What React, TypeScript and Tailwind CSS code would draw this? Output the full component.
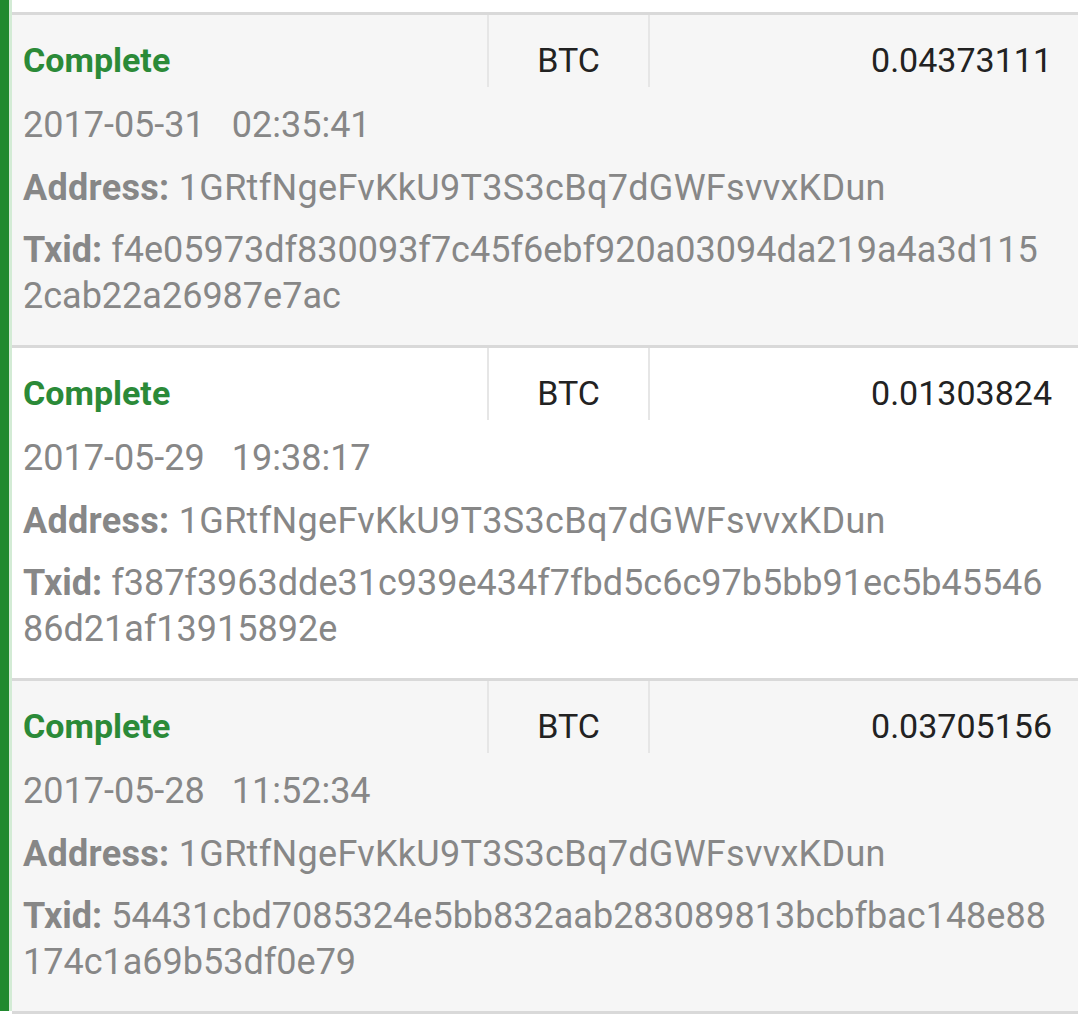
const rows = [
  {
    amount: "0.04373111",
    date: "2017-05-31",
    time: "02:35:41",
    address: "1GRtfNgeFvKkU9T3S3cBq7dGWFsvvxKDun",
    txid: ["f4e05973df830093f7c45f6ebf920a03094da219a4a3d115", "2cab22a26987e7ac"],
    bg: "bg-[#f6f6f6]",
  },
  {
    amount: "0.01303824",
    date: "2017-05-29",
    time: "19:38:17",
    address: "1GRtfNgeFvKkU9T3S3cBq7dGWFsvvxKDun",
    txid: ["f387f3963dde31c939e434f7fbd5c6c97b5bb91ec5b45546", "86d21af13915892e"],
    bg: "bg-white",
  },
  {
    amount: "0.03705156",
    date: "2017-05-28",
    time: "11:52:34",
    address: "1GRtfNgeFvKkU9T3S3cBq7dGWFsvvxKDun",
    txid: ["54431cbd7085324e5bb832aab283089813bcbfbac148e88", "174c1a69b53df0e79"],
    bg: "bg-[#f6f6f6]",
  },
];

function Bar() {
  return (
    <div className="flex shrink-0">
      <div className="w-[9px] bg-[#21892f]" />
      <div className="w-[3px] bg-[#d3ebd5]" />
    </div>
  );
}

function Row({ r }: { r: (typeof rows)[number] }) {
  return (
    <div className={`flex ${r.bg}`}>
      <Bar />
      <div className="flex-1 border-t-[3px] border-[#d9d9d9]">
        <div className="flex h-[72px] text-[34px]">
          <div className="flex-1 pl-[11px] pt-[22px] border-r-2 border-[#e6e6e6] text-[#2b8a38] font-bold">
            Complete
          </div>
          <div className="w-[161px] pt-[22px] text-center border-r-2 border-[#e6e6e6] text-[#222]">BTC</div>
          <div className="w-[428px] pt-[22px] pr-[26px] text-right text-[#222]">{r.amount}</div>
        </div>
        <div className="pl-[11px] pr-[20px] pb-[26px] text-[36px] text-[#878787]">
          <div className="mt-[15px]">
            <span>{r.date}</span>
            <span className="ml-[27px]">{r.time}</span>
          </div>
          <div className="mt-[17px] tracking-[0.3px]">
            <span className="font-bold">Address:</span> {r.address}
          </div>
          <div className="mt-[16px] whitespace-nowrap">
            <div>
              <span className="font-bold">Txid:</span> {r.txid[0]}
            </div>
            <div>{r.txid[1]}</div>
          </div>
        </div>
      </div>
    </div>
  );
}

export default function App() {
  return (
    <div className="min-h-[1027px] bg-white leading-[46px] font-['Roboto',sans-serif]">
      <div className="flex h-[12px] bg-white">
        <Bar />
      </div>
      {rows.map((r) => (
        <Row key={r.amount} r={r} />
      ))}
      <div className="ml-[12px] h-[3px] bg-[#d9d9d9]" />
    </div>
  );
}
